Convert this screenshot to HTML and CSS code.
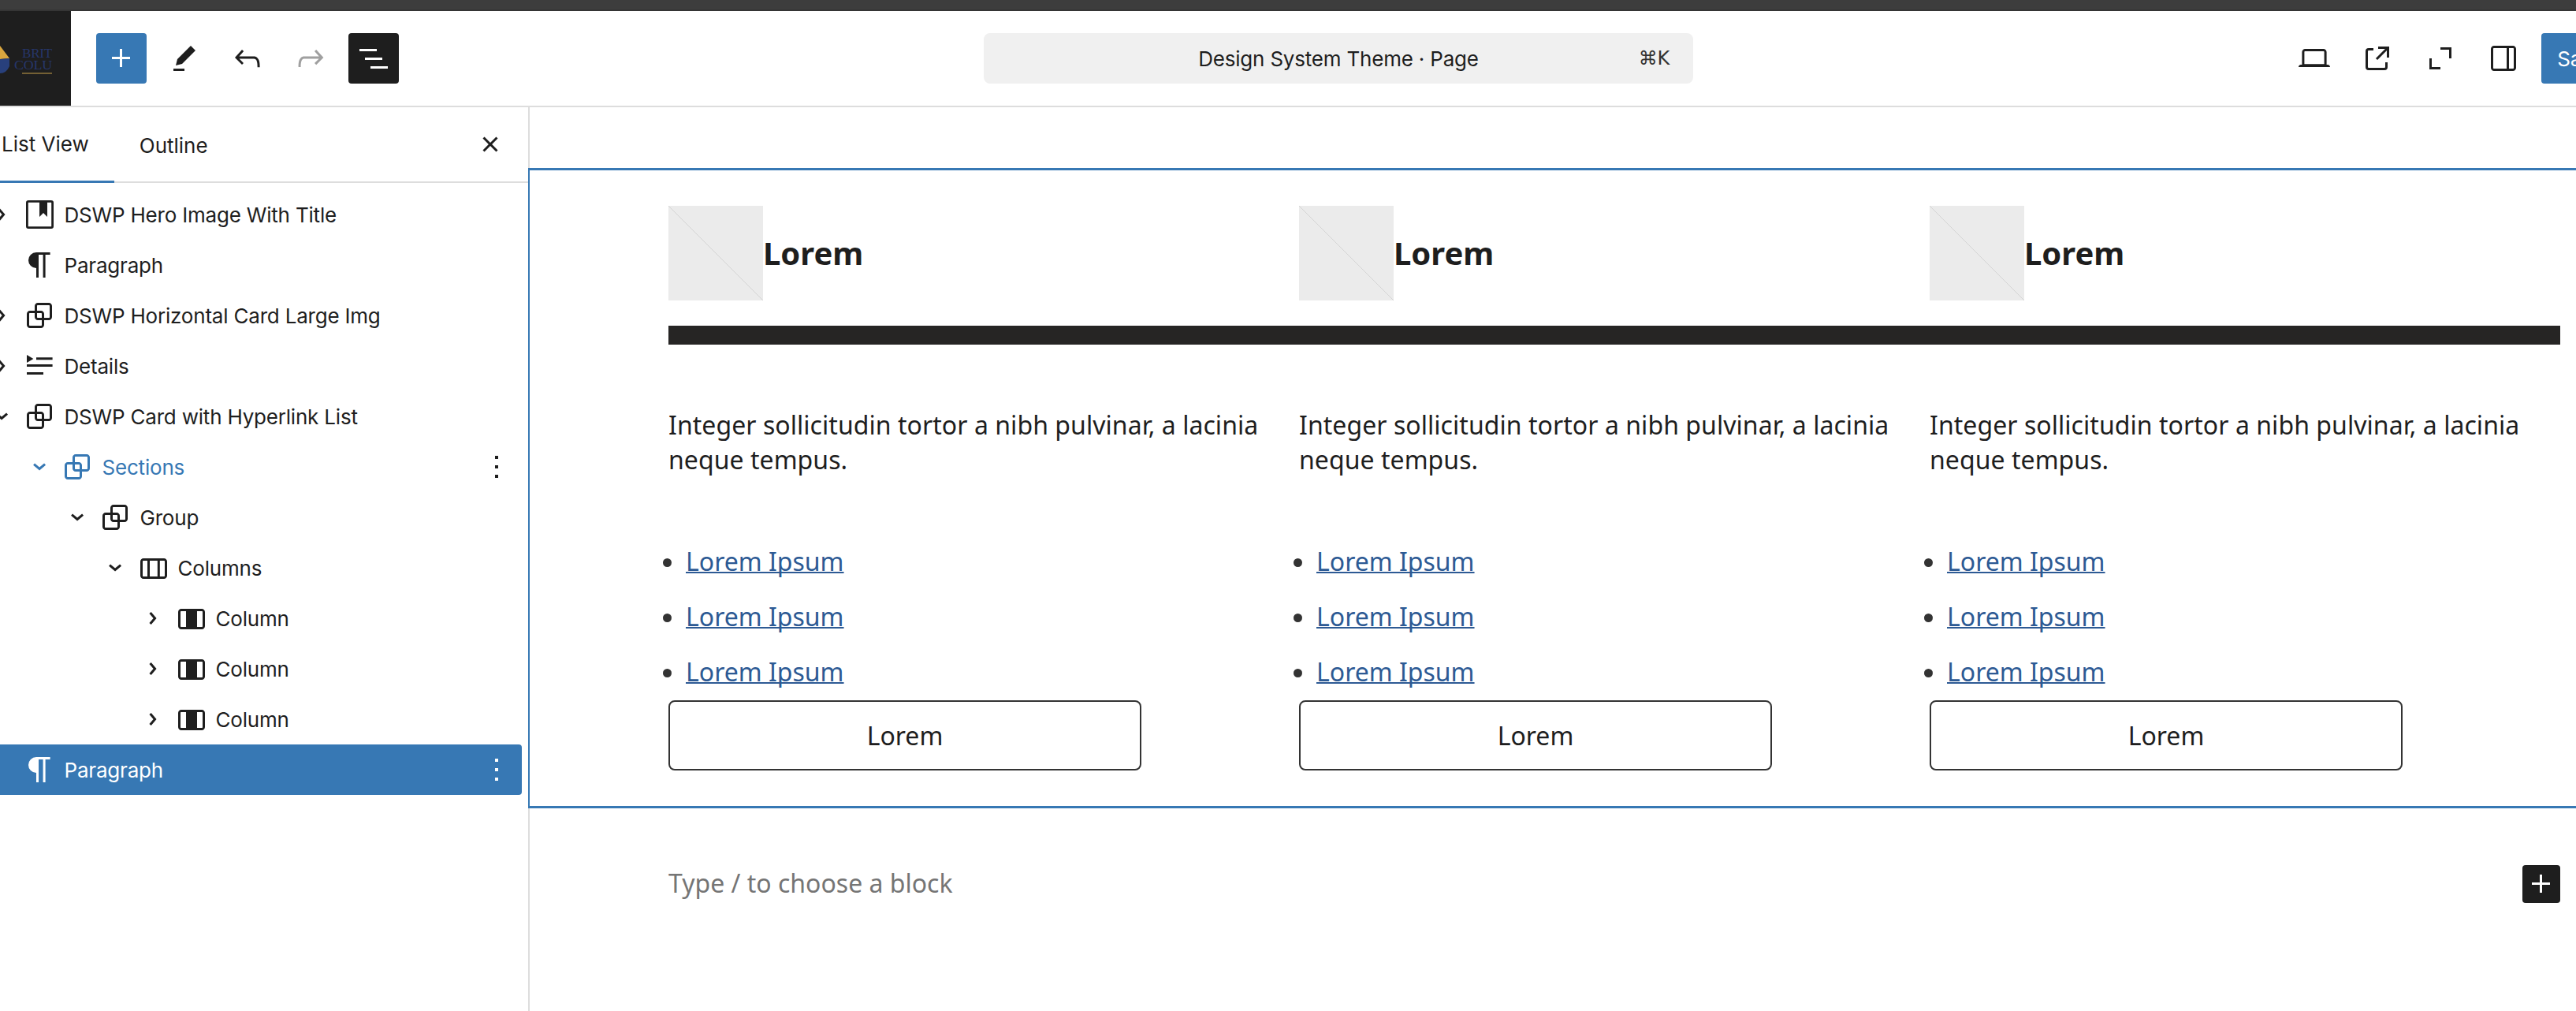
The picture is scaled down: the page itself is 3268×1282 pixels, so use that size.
FILE: index.html
```html
<!DOCTYPE html>
<html>
<head>
    <meta charset="utf-8">
    <title>Design System Theme - Page</title>
    <link rel="stylesheet" href="styles.css">
</head>
<body>
    <svg class="icon-defs">
        <symbol id="i-plus" viewBox="0 0 24 24"><path d="M11 12.5V17.5H12.5V12.5H17.5V11H12.5V6H11V11H6V12.5H11Z"/></symbol>
        <symbol id="i-pencil" viewBox="0 0 24 24"><path d="m19 7-3-3-8.5 8.5-1 4 4-1L19 7Zm-7 11.5H5V20h7v-1.5Z"/></symbol>
        <symbol id="i-undo" viewBox="0 0 24 24"><path d="M18.3 11.7c-.6-.6-1.4-.9-2.3-.9H6.7l2.9-3.3-1.1-1-4.5 5L8.5 16l1-1-2.7-2.7H16c.5 0 .9.2 1.3.5 1 1 1 3.4 1 4.5v.3h1.5v-.2c0-1.5 0-4.3-1.5-5.7z"/></symbol>
        <symbol id="i-redo" viewBox="0 0 24 24"><path d="M15.6 6.5l-1.1 1 2.9 3.3H8c-.9 0-1.7.3-2.3.9-1.4 1.5-1.4 4.2-1.4 5.6v.2h1.5v-.3c0-1.1 0-3.5 1-4.5.3-.3.7-.5 1.3-.5h9.2L14.5 15l1.1 1.1 4.6-4.6-4.6-5z"/></symbol>
        <symbol id="i-listview" viewBox="0 0 24 24"><path d="M3 6h11v1.5H3V6Zm3.5 5.5h11V13h-11v-1.5ZM21 17H10v1.5h11V17Z"/></symbol>
        <symbol id="i-close" viewBox="0 0 24 24"><path d="M12 13.06l3.712 3.713 1.061-1.06L13.061 12l3.712-3.712-1.06-1.06L12 10.938 8.288 7.227l-1.061 1.06L10.939 12l-3.712 3.712 1.06 1.061L12 13.061z"/></symbol>
        <symbol id="i-laptop" viewBox="0 0 24 24"><path d="M20.5 16h-.7V8c0-1.1-.9-2-2-2H6.2c-1.1 0-2 .9-2 2v8h-.7c-.8 0-1.5.7-1.5 1.5h20c0-.8-.7-1.5-1.5-1.5zM5.7 8c0-.3.2-.5.5-.5h11.6c.3 0 .5.2.5.5v7.6H5.7V8z"/></symbol>
        <symbol id="i-external" viewBox="0 0 24 24"><path d="M19.5 4.5h-7V6h4.44l-5.97 5.97 1.06 1.06L18 7.06v4.44h1.5v-7Zm-13 1a2 2 0 0 0-2 2v10a2 2 0 0 0 2 2h10a2 2 0 0 0 2-2v-3H17v3a.5.5 0 0 1-.5.5h-10a.5.5 0 0 1-.5-.5v-10a.5.5 0 0 1 .5-.5h3V5.5h-3Z"/></symbol>
        <symbol id="i-fullscreen" viewBox="0 0 24 24"><path d="M19 5h-7v1.5h5.5V12H19V5ZM5 19h7v-1.5H6.5V12H5v7Z"/></symbol>
        <symbol id="i-sidebar" viewBox="0 0 24 24"><path d="M18 4H6c-1.1 0-2 .9-2 2v12c0 1.1.9 2 2 2h12c1.1 0 2-.9 2-2V6c0-1.1-.9-2-2-2zm-4 14.5H6c-.3 0-.5-.2-.5-.5V6c0-.3.2-.5.5-.5h8v13zm4.5-.5c0 .3-.2.5-.5.5h-2.5v-13H18c.3 0 .5.2.5.5v12z"/></symbol>
        <symbol id="i-hero" viewBox="0 0 24 24"><rect x="4.2" y="3.7" width="16.1" height="16.6" rx=".8" fill="none" stroke="currentColor" stroke-width="1.4"/><path d="M12 4h5v9.5L14.5 11 12 13.5V4Z"/></symbol>
        <symbol id="i-paragraph" viewBox="0 0 24 24"><path d="M18.8 4H10a5 5 0 0 0 0 10v6h1.5V5.5h2.8V20h1.5V5.5h3V4Z"/></symbol>
        <symbol id="i-group" viewBox="0 0 24 24"><path d="M18 4h-7c-1.1 0-2 .9-2 2v3H6c-1.1 0-2 .9-2 2v7c0 1.1.9 2 2 2h7c1.1 0 2-.9 2-2v-3h3c1.1 0 2-.9 2-2V6c0-1.1-.9-2-2-2zm-4.5 14c0 .3-.2.5-.5.5H6c-.3 0-.5-.2-.5-.5v-7c0-.3.2-.5.5-.5h3V13c0 1.1.9 2 2 2h2.5v3zm0-4.5H11c-.3 0-.5-.2-.5-.5v-2.5H13c.3 0 .5.2.5.5v2.5zm5-.5c0 .3-.2.5-.5.5h-3V11c0-1.1-.9-2-2-2h-2.5V6c0-.3.2-.5.5-.5h7c.3 0 .5.2.5.5v7z"/></symbol>
        <symbol id="i-details" viewBox="0 0 24 24"><path d="M4 5v5l4.2-2.5L4 5Zm6 1.6V8.1h10.3V6.6H10ZM4 11v1.5h16.3V11H4Zm0 5v1.5h10.5V16H4Z"/></symbol>
        <symbol id="i-columns" viewBox="0 0 24 24"><path d="M19 6H6c-1.1 0-2 .9-2 2v9c0 1.1.9 2 2 2h13c1.1 0 2-.9 2-2V8c0-1.1-.9-2-2-2zm-4.1 1.5v10H10v-10h4.9zM5.5 17V8c0-.3.2-.5.5-.5h2.5v10H6c-.3 0-.5-.2-.5-.5zm14 0c0 .3-.2.5-.5.5h-2.6v-10H19c.3 0 .5.2.5.5v9z"/></symbol>
        <symbol id="i-column" viewBox="0 0 24 24"><path d="M19 6H6c-1.1 0-2 .9-2 2v9c0 1.1.9 2 2 2h13c1.1 0 2-.9 2-2V8c0-1.1-.9-2-2-2zM6 17.5c-.3 0-.5-.2-.5-.5V8c0-.3.2-.5.5-.5h3v10H6zm13.5-.5c0 .3-.2.5-.5.5h-3v-10h3c.3 0 .5.2.5.5v9z"/></symbol>
        <symbol id="i-right" viewBox="0 0 24 24"><path d="M10.86 8.04l3.42 3.99-3.42 3.99-1.14-.98 2.58-3.01-2.58-3.01 1.14-.98Z"/></symbol>
        <symbol id="i-down" viewBox="0 0 24 24"><path d="M8.04 10.86l3.99 3.42 3.99-3.42-.98-1.14-3.01 2.58-3.01-2.58-.98 1.14Z"/></symbol>
        <symbol id="i-more" viewBox="0 0 24 24"><path d="M13 19h-2v-2h2v2zm0-6h-2v-2h2v2zm0-6h-2V5h2v2z"/></symbol>
    </svg>

    <div class="topstrip"></div>

    <header class="toolbar">
        <div class="site-logo">
            <svg width="90" height="120" viewBox="0 0 90 120">
                <path d="M0 44 L12 60 L0 61 Z" fill="#d9a63f"/>
                <path d="M0 61 L12 60 L12 70 Q8 79 0 79 Z" fill="#28407c"/>
                <text class="logo-text" x="28" y="59" textLength="38" lengthAdjust="spacingAndGlyphs">BRIT</text>
                <text class="logo-text" x="18" y="74" textLength="48" lengthAdjust="spacingAndGlyphs">COLU</text>
                <path d="M28 79h38" stroke="#c9a24a" stroke-width="1"/>
            </svg>
        </div>
        <div class="tools">
            <button class="tool tool-blue"><svg class="ico"><use href="#i-plus"/></svg></button>
            <button class="tool"><svg class="ico"><use href="#i-pencil"/></svg></button>
            <button class="tool"><svg class="ico"><use href="#i-undo"/></svg></button>
            <button class="tool tool-off"><svg class="ico"><use href="#i-redo"/></svg></button>
            <button class="tool tool-dark"><svg class="ico"><use href="#i-listview"/></svg></button>
        </div>
        <div class="command-bar">
            <span class="command-title">Design System Theme · Page</span>
            <span class="command-key">⌘K</span>
        </div>
        <div class="tools tools-right">
            <button class="tool"><svg class="ico"><use href="#i-laptop"/></svg></button>
            <button class="tool"><svg class="ico"><use href="#i-external"/></svg></button>
            <button class="tool"><svg class="ico"><use href="#i-fullscreen"/></svg></button>
            <button class="tool"><svg class="ico"><use href="#i-sidebar"/></svg></button>
            <button class="save">Save</button>
        </div>
    </header>

    <div class="editor">
        <aside class="sidebar">
            <div class="tabs">
                <div class="tab tab-active">List View</div>
                <div class="tab">Outline</div>
                <button class="tab-close"><svg class="ico"><use href="#i-close"/></svg></button>
            </div>
            <div class="tree">
                <div class="row">
                    <svg class="ico"><use href="#i-right"/></svg>
                    <svg class="ico"><use href="#i-hero"/></svg>
                    <span class="label">DSWP Hero Image With Title</span>
                </div>
                <div class="row">
                    <span class="ico"></span>
                    <svg class="ico"><use href="#i-paragraph"/></svg>
                    <span class="label">Paragraph</span>
                </div>
                <div class="row">
                    <svg class="ico"><use href="#i-right"/></svg>
                    <svg class="ico"><use href="#i-group"/></svg>
                    <span class="label">DSWP Horizontal Card Large Img</span>
                </div>
                <div class="row">
                    <svg class="ico"><use href="#i-right"/></svg>
                    <svg class="ico"><use href="#i-details"/></svg>
                    <span class="label">Details</span>
                </div>
                <div class="row">
                    <svg class="ico"><use href="#i-down"/></svg>
                    <svg class="ico"><use href="#i-group"/></svg>
                    <span class="label">DSWP Card with Hyperlink List</span>
                </div>
                <div class="row level-1 row-parent">
                    <svg class="ico"><use href="#i-down"/></svg>
                    <svg class="ico"><use href="#i-group"/></svg>
                    <span class="label">Sections</span>
                    <svg class="ico more"><use href="#i-more"/></svg>
                </div>
                <div class="row level-2">
                    <svg class="ico"><use href="#i-down"/></svg>
                    <svg class="ico"><use href="#i-group"/></svg>
                    <span class="label">Group</span>
                </div>
                <div class="row level-3">
                    <svg class="ico"><use href="#i-down"/></svg>
                    <svg class="ico"><use href="#i-columns"/></svg>
                    <span class="label">Columns</span>
                </div>
                <div class="row level-4">
                    <svg class="ico"><use href="#i-right"/></svg>
                    <svg class="ico"><use href="#i-column"/></svg>
                    <span class="label">Column</span>
                </div>
                <div class="row level-4">
                    <svg class="ico"><use href="#i-right"/></svg>
                    <svg class="ico"><use href="#i-column"/></svg>
                    <span class="label">Column</span>
                </div>
                <div class="row level-4">
                    <svg class="ico"><use href="#i-right"/></svg>
                    <svg class="ico"><use href="#i-column"/></svg>
                    <span class="label">Column</span>
                </div>
                <div class="row row-selected">
                    <span class="ico"></span>
                    <svg class="ico"><use href="#i-paragraph"/></svg>
                    <span class="label">Paragraph</span>
                    <svg class="ico more"><use href="#i-more"/></svg>
                </div>
            </div>
        </aside>

        <main class="canvas">
            <section class="block-selected">
                <div class="col-grid">
                    <div class="col-head"><svg class="placeholder" viewBox="0 0 60 60"><path d="M0 0L60 60"/></svg><h2>Lorem</h2></div>
                    <div class="col-head"><svg class="placeholder" viewBox="0 0 60 60"><path d="M0 0L60 60"/></svg><h2>Lorem</h2></div>
                    <div class="col-head"><svg class="placeholder" viewBox="0 0 60 60"><path d="M0 0L60 60"/></svg><h2>Lorem</h2></div>
                </div>
                <div class="divider"></div>
                <div class="col-grid">
                    <div class="col">
                        <p>Integer sollicitudin tortor a nibh pulvinar, a lacinia neque tempus.</p>
                        <ul>
                            <li><a href="#">Lorem Ipsum</a></li>
                            <li><a href="#">Lorem Ipsum</a></li>
                            <li><a href="#">Lorem Ipsum</a></li>
                        </ul>
                        <a class="outline-btn" href="#">Lorem</a>
                    </div>
                    <div class="col">
                        <p>Integer sollicitudin tortor a nibh pulvinar, a lacinia neque tempus.</p>
                        <ul>
                            <li><a href="#">Lorem Ipsum</a></li>
                            <li><a href="#">Lorem Ipsum</a></li>
                            <li><a href="#">Lorem Ipsum</a></li>
                        </ul>
                        <a class="outline-btn" href="#">Lorem</a>
                    </div>
                    <div class="col">
                        <p>Integer sollicitudin tortor a nibh pulvinar, a lacinia neque tempus.</p>
                        <ul>
                            <li><a href="#">Lorem Ipsum</a></li>
                            <li><a href="#">Lorem Ipsum</a></li>
                            <li><a href="#">Lorem Ipsum</a></li>
                        </ul>
                        <a class="outline-btn" href="#">Lorem</a>
                    </div>
                </div>
            </section>
            <div class="new-block">
                <span class="new-hint">Type / to choose a block</span>
                <button class="new-add"><svg class="ico"><use href="#i-plus"/></svg></button>
            </div>
        </main>
    </div>
</body>
</html>
```

FILE: styles.css
```css
* {
    box-sizing: border-box;
}

html, body {
    margin: 0;
    height: 1282px;
    overflow: hidden;
    background: #fff;
    color: #1e1e1e;
    font-family: Inter, "Liberation Sans", sans-serif;
    font-size: 26px;
    letter-spacing: -.2px;
}

button {
    border: 0;
    padding: 0;
    background: none;
    font: inherit;
    letter-spacing: inherit;
    color: inherit;
}

.icon-defs {
    display: none;
}

.ico {
    display: block;
    flex: none;
    width: 48px;
    height: 48px;
    fill: currentColor;
}

/* top bar */
.topstrip {
    height: 14px;
    background: #3d3d3d;
    border-bottom: 2px solid #353535;
}

.toolbar {
    display: flex;
    align-items: center;
    height: 122px;
    border-bottom: 2px solid #ddd;
}

.site-logo {
    flex: none;
    width: 90px;
    height: 120px;
    background: #1e1e1e;
}

.site-logo svg {
    display: block;
}

.logo-text {
    font-family: "Liberation Serif", serif;
    font-size: 17px;
    fill: #26366b;
}

.tools {
    display: flex;
    flex: none;
    gap: 16px;
    margin-left: 32px;
}

.tools-right {
    margin-left: 756px;
}

.tool {
    display: flex;
    align-items: center;
    justify-content: center;
    width: 64px;
    height: 64px;
    border-radius: 4px;
}

.tool-blue {
    background: #3778b4;
    color: #fff;
}

.tool-dark {
    background: #1e1e1e;
    color: #fff;
}

.tool-off {
    color: #a0a0a0;
}

.save {
    width: 100px;
    height: 64px;
    border-radius: 4px;
    background: #3778b4;
    color: #fff;
}

.command-bar {
    display: flex;
    flex: none;
    align-items: center;
    justify-content: center;
    position: relative;
    width: 900px;
    height: 64px;
    margin-left: 742px;
    border-radius: 8px;
    background: #f0f0f0;
}

.command-key {
    position: absolute;
    right: 30px;
    font-family: "DejaVu Sans", sans-serif;
    font-size: 24px;
    color: #333;
}

/* sidebar */
.editor {
    display: flex;
    height: 1146px;
}

.sidebar {
    flex: none;
    width: 672px;
    overflow: hidden;
    border-right: 2px solid #ddd;
}

.tabs {
    display: flex;
    align-items: center;
    height: 96px;
    margin-left: -30px;
    border-bottom: 2px solid #ddd;
    letter-spacing: 0;
}

.tab {
    display: flex;
    align-items: center;
    height: 96px;
    padding: 0 32px;
    margin-bottom: -2px;
}

.tab-active {
    border-bottom: 3px solid #3778b4;
}

.tab-close {
    margin-left: auto;
    margin-right: 24px;
}

.tree {
    width: 684px;
    margin-left: -22px;
    padding-top: 8px;
}

.row {
    display: flex;
    align-items: center;
    height: 64px;
    padding-right: 8px;
}

.level-1 { padding-left: 48px; }
.level-2 { padding-left: 96px; }
.level-3 { padding-left: 144px; }
.level-4 { padding-left: 192px; }

.label {
    margin-left: 7.5px;
    white-space: nowrap;
}

.more {
    margin-left: auto;
    color: #1e1e1e;
}

.row-parent {
    color: #3778b4;
}

.row-selected {
    border-radius: 4px;
    background: #3778b4;
    color: #fff;
}

.row-selected .more {
    color: #fff;
}

/* canvas */
.canvas {
    flex: 1;
    min-width: 0;
    padding-top: 77px;
    font-family: "Noto Sans", sans-serif;
    font-size: 32px;
    letter-spacing: 0;
}

.block-selected {
    margin-left: -2px;
    padding: 45px 0 45px 176px;
    border: solid #3778b4;
    border-width: 3px 0 3px 2px;
}

.col-grid {
    display: grid;
    grid-template-columns: repeat(3, 800px);
}

.col-head {
    display: flex;
    align-items: center;
}

.col-head h2 {
    margin: 0;
    padding-bottom: 2px;
    font-size: 40px;
    font-weight: 700;
}

.placeholder {
    display: block;
    width: 120px;
    height: 120px;
    background: #ebebeb;
    stroke: #d4d4d4;
    stroke-width: .5;
}

.divider {
    width: 2400px;
    height: 24px;
    margin: 32px 0 80px;
    background: #262524;
}

.col p {
    margin: 0 0 85px;
    line-height: 44px;
    letter-spacing: .05px;
}

.col ul {
    margin: 0 0 14px;
    padding-left: 22px;
}

.col li {
    line-height: 44px;
    margin-bottom: 26px;
}

.col li:last-child {
    margin-bottom: 0;
}

.col li::marker {
    color: #333;
}

.col li a {
    color: #2d5a94;
    text-decoration-thickness: 2px;
    text-decoration-skip-ink: none;
}

.outline-btn {
    display: flex;
    align-items: center;
    justify-content: center;
    width: 600px;
    height: 89px;
    border: 2px solid #333;
    border-radius: 8px;
    color: #1e1e1e;
    text-decoration: none;
}

.new-block {
    display: flex;
    align-items: center;
    justify-content: space-between;
    height: 48px;
    margin-top: 72px;
    padding: 0 20px 0 176px;
}

.new-hint {
    padding-bottom: 3px;
    color: #757575;
}

.new-add {
    width: 48px;
    height: 48px;
    border-radius: 4px;
    background: #1e1e1e;
    color: #fff;
}
```
